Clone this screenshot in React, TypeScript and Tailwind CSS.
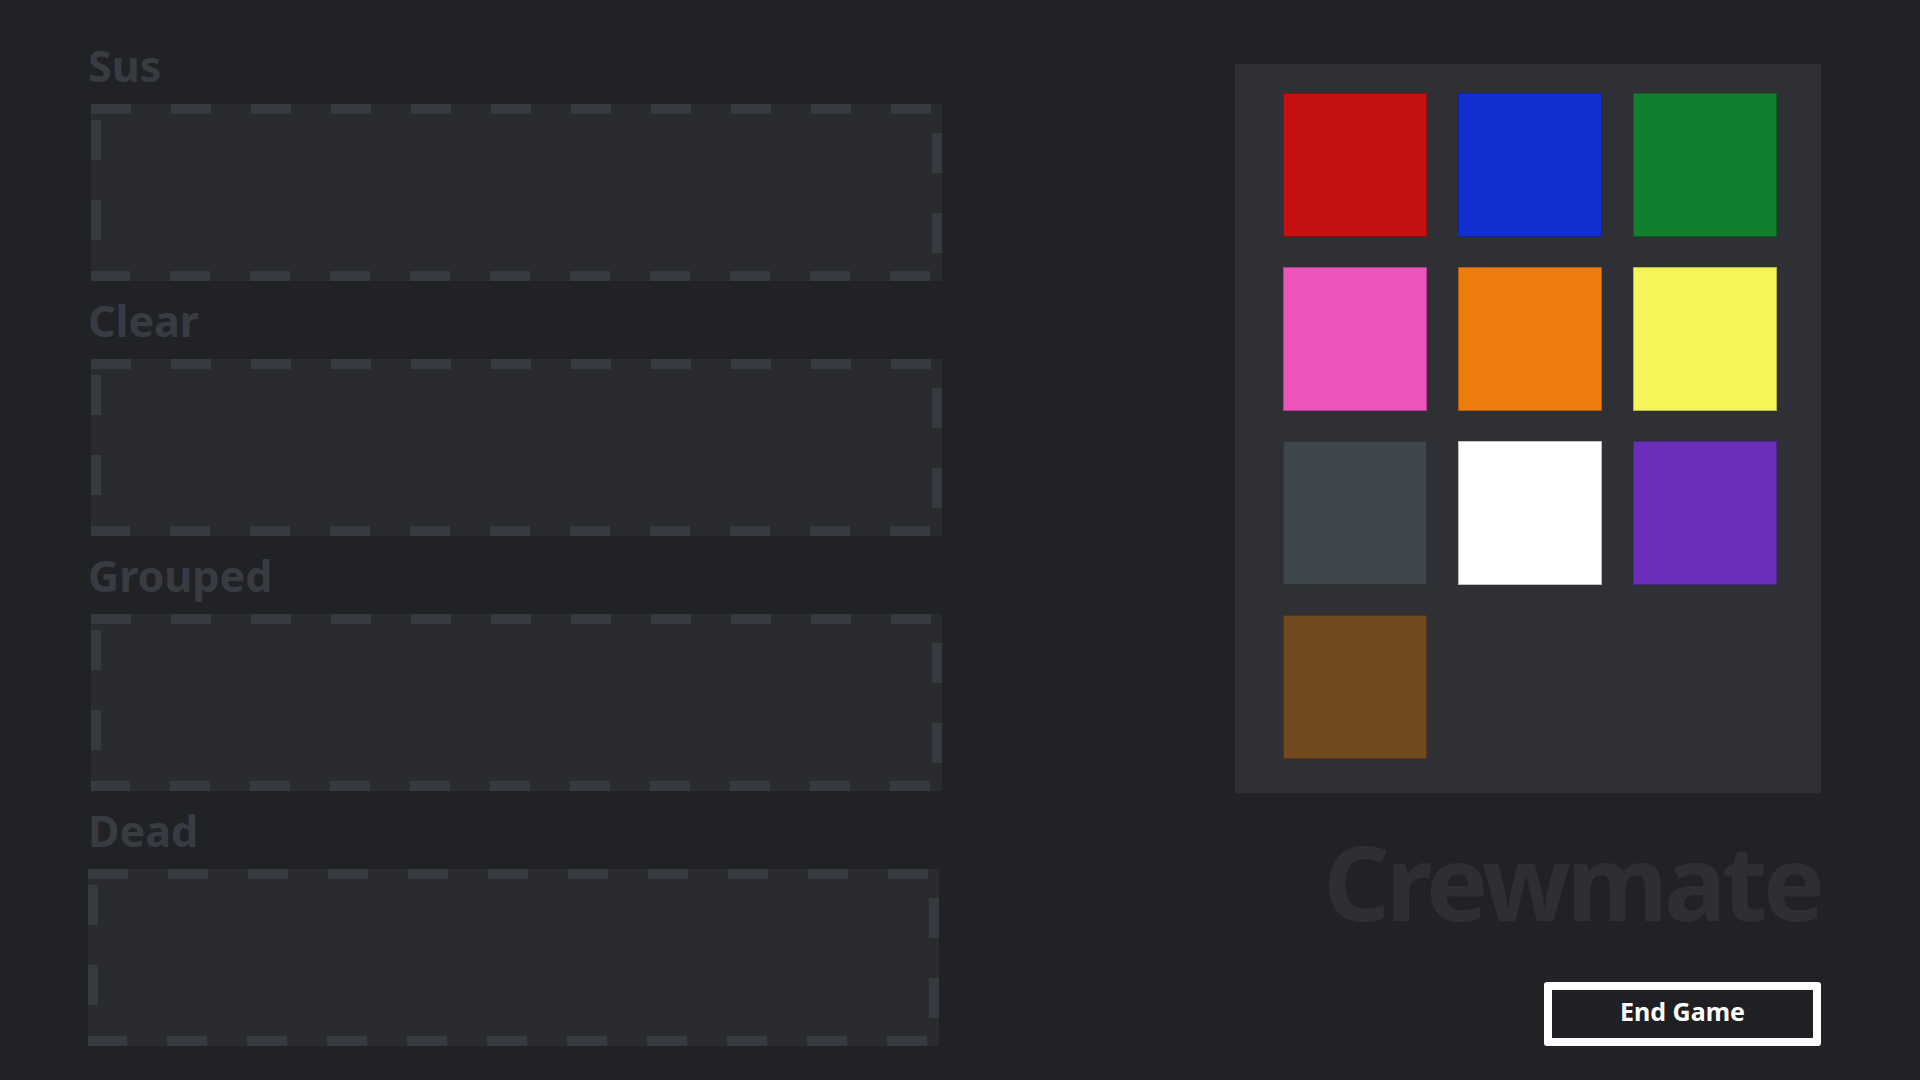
const ZONES = ['Sus', 'Clear', 'Grouped', 'Dead'];

const COLORS = [
  '#c51111',
  '#132ed1',
  '#117f2d',
  '#ed54ba',
  '#ef7d0d',
  '#f5f557',
  '#3f474e',
  '#ffffff',
  '#6b2fbb',
  '#71491e',
];

// 10px dashes, 40 on / 40 off, drawn as background strips
const DASHED =
  'w-[851px] h-[177px] bg-[#2a2b2f] ' +
  '[background-image:linear-gradient(to_right,#383a42_50%,transparent_50%),linear-gradient(to_right,#383a42_50%,transparent_50%),linear-gradient(to_bottom,#383a42_50%,transparent_50%),linear-gradient(to_bottom,#383a42_50%,transparent_50%)] ' +
  '[background-size:80px_10px,80px_10px,10px_80px,10px_80px] ' +
  '[background-position:left_0_top_0,left_-1px_bottom_0,left_0_top_16px,right_0_top_29px] ' +
  '[background-repeat:repeat-x,repeat-x,repeat-y,repeat-y]';

function Zone({ name, last }: { name: string; last: boolean }) {
  return (
    <div className="flex flex-col">
      <h2 className="text-[43px] leading-[52px] font-bold text-[#393b42] mb-[12px]">{name}</h2>
      <div className={last ? DASHED : 'ml-[3px] ' + DASHED} />
    </div>
  );
}

export default function App() {
  return (
    <div className="w-full h-screen bg-[#212226] flex font-['Noto_Sans',sans-serif] overflow-hidden">
      {/* drop zones */}
      <div className="pl-[88px] pt-[40px] flex flex-col gap-[14px]">
        {ZONES.map((z, i) => (
          <Zone key={z} name={z} last={i === ZONES.length - 1} />
        ))}
      </div>

      {/* palette + status */}
      <div className="ml-auto pr-[99px] pt-[64px] flex flex-col items-end">
        <div className="w-[586px] h-[729px] bg-[#2f3035] pl-[48px] pt-[29px]">
          <div className="grid grid-cols-[repeat(3,144px)] gap-x-[31px] gap-y-[30px]">
            {COLORS.map((c) => (
              <div
                key={c}
                className="w-[144px] h-[144px] border border-black/25"
                style={{ background: c }}
              />
            ))}
          </div>
        </div>

        <p className="mt-[36px] text-[104px] leading-none font-bold tracking-[-0.04em] text-[#2e2f34]">
          Crewmate
        </p>

        <button className="mt-[49px] w-[277px] h-[64px] pb-[4px] border-[8px] border-white rounded-[3px] bg-[#1f2024] text-white text-[25px] font-bold">
          End Game
        </button>
      </div>
    </div>
  );
}
